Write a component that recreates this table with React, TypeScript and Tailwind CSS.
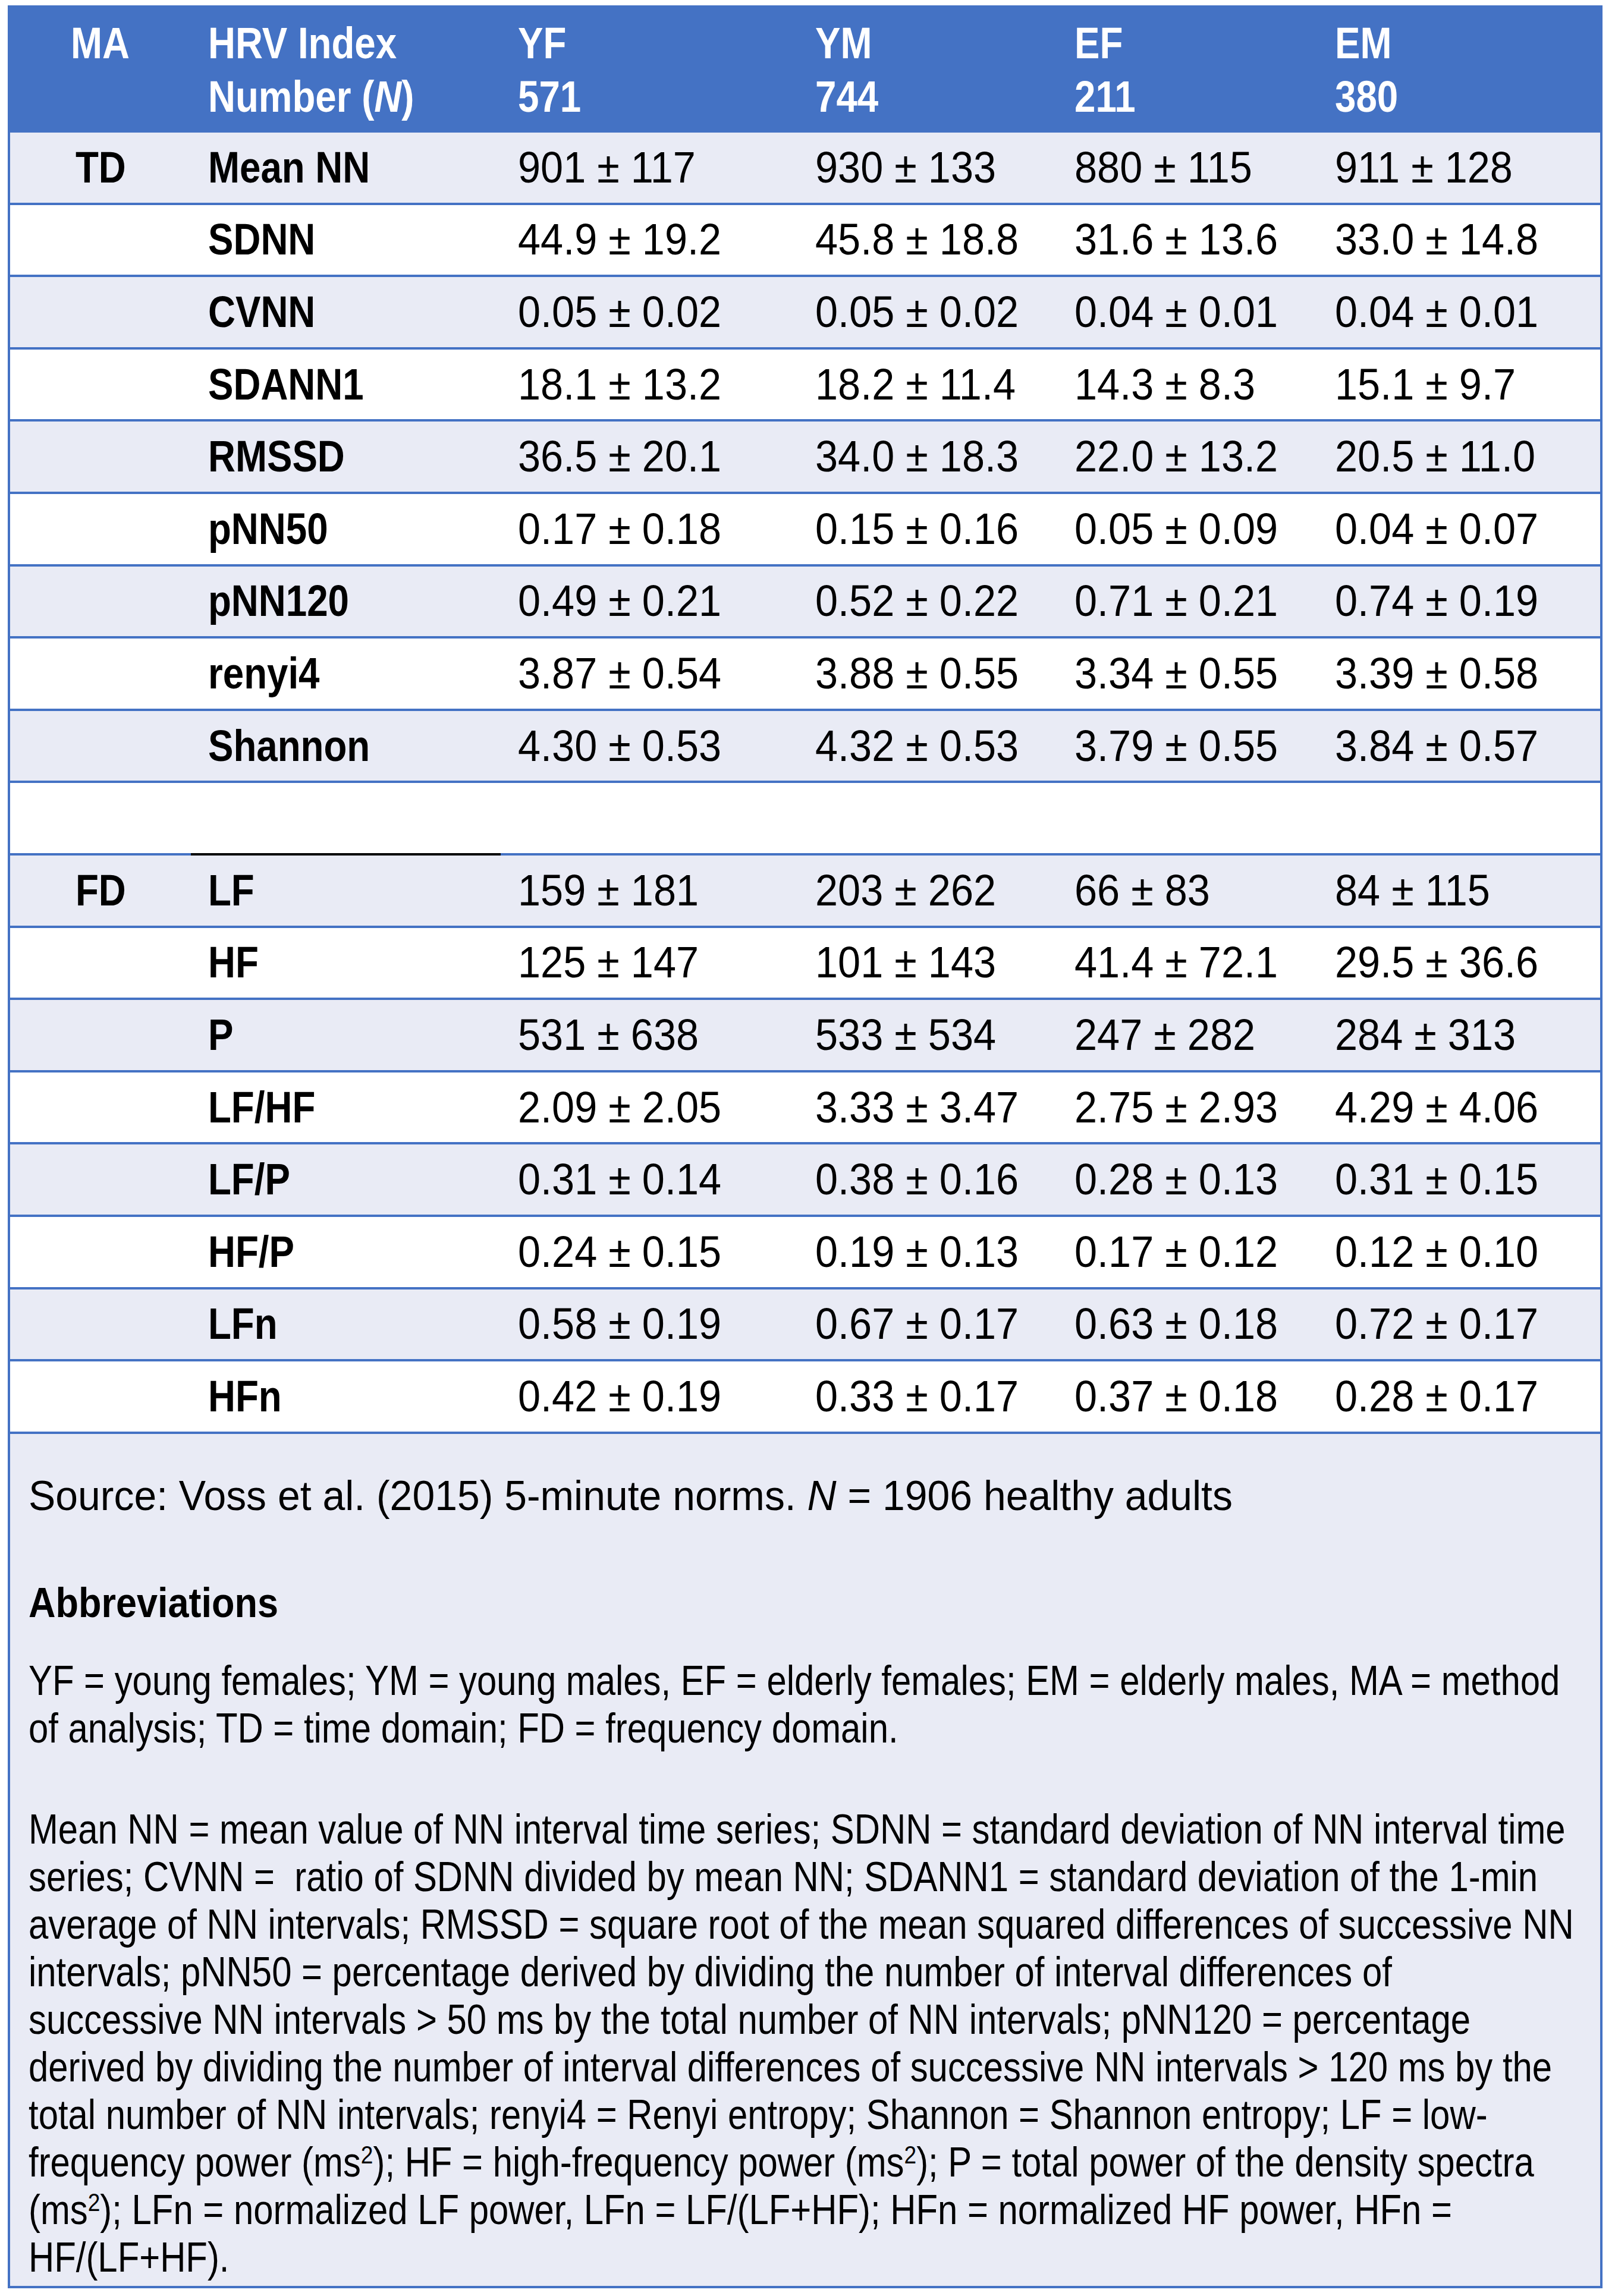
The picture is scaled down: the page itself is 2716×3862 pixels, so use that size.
import React from "react";

const cols = "grid grid-cols-[304px_521px_500px_436px_438px_1fr]";

type Row = { ma?: string; name: string; v: string[] } | null;

const rows: Row[] = [
  { ma: "TD", name: "Mean NN", v: ["901 ± 117", "930 ± 133", "880 ± 115", "911 ± 128"] },
  { name: "SDNN", v: ["44.9 ± 19.2", "45.8 ± 18.8", "31.6 ± 13.6", "33.0 ± 14.8"] },
  { name: "CVNN", v: ["0.05 ± 0.02", "0.05 ± 0.02", "0.04 ± 0.01", "0.04 ± 0.01"] },
  { name: "SDANN1", v: ["18.1 ± 13.2", "18.2 ± 11.4", "14.3 ± 8.3", "15.1 ± 9.7"] },
  { name: "RMSSD", v: ["36.5 ± 20.1", "34.0 ± 18.3", "22.0 ± 13.2", "20.5 ± 11.0"] },
  { name: "pNN50", v: ["0.17 ± 0.18", "0.15 ± 0.16", "0.05 ± 0.09", "0.04 ± 0.07"] },
  { name: "pNN120", v: ["0.49 ± 0.21", "0.52 ± 0.22", "0.71 ± 0.21", "0.74 ± 0.19"] },
  { name: "renyi4", v: ["3.87 ± 0.54", "3.88 ± 0.55", "3.34 ± 0.55", "3.39 ± 0.58"] },
  { name: "Shannon", v: ["4.30 ± 0.53", "4.32 ± 0.53", "3.79 ± 0.55", "3.84 ± 0.57"] },
  null,
  { ma: "FD", name: "LF", v: ["159 ± 181", "203 ± 262", "66 ± 83", "84 ± 115"] },
  { name: "HF", v: ["125 ± 147", "101 ± 143", "41.4 ± 72.1", "29.5 ± 36.6"] },
  { name: "P", v: ["531 ± 638", "533 ± 534", "247 ± 282", "284 ± 313"] },
  { name: "LF/HF", v: ["2.09 ± 2.05", "3.33 ± 3.47", "2.75 ± 2.93", "4.29 ± 4.06"] },
  { name: "LF/P", v: ["0.31 ± 0.14", "0.38 ± 0.16", "0.28 ± 0.13", "0.31 ± 0.15"] },
  { name: "HF/P", v: ["0.24 ± 0.15", "0.19 ± 0.13", "0.17 ± 0.12", "0.12 ± 0.10"] },
  { name: "LFn", v: ["0.58 ± 0.19", "0.67 ± 0.17", "0.63 ± 0.18", "0.72 ± 0.17"] },
  { name: "HFn", v: ["0.42 ± 0.19", "0.33 ± 0.17", "0.37 ± 0.18", "0.28 ± 0.17"] },
];

const groups = [
  { label: "YF", n: "571" },
  { label: "YM", n: "744" },
  { label: "EF", n: "211" },
  { label: "EM", n: "380" },
];

// the source uses a condensed face; squeeze Liberation Sans to match
const Bold = ({ children, center }: { children: React.ReactNode; center?: boolean }) => (
  <span className={`inline-block whitespace-nowrap font-bold scale-x-[0.86] ${center ? "origin-center" : "origin-left"}`}>
    {children}
  </span>
);

const Num = ({ children }: { children: React.ReactNode }) => (
  <span className="inline-block origin-left scale-x-[0.925] whitespace-nowrap">{children}</span>
);

const Sq = () => <sup className="text-[0.62em]">2</sup>;

const Line = ({ children, squeeze = "scale-x-[0.855]" }: { children: React.ReactNode; squeeze?: string }) => (
  <div className="h-[80px] whitespace-nowrap">
    <span className={`inline-block origin-left ${squeeze}`}>{children}</span>
  </div>
);

export default function App() {
  return (
    <div className="min-h-screen bg-white pl-[13px] pt-[9px] font-['Liberation_Sans',Arial,sans-serif] text-black">
      <div className="w-[2682px] overflow-hidden border-4 border-[#4472C4]">
        {/* header */}
        <div className={`${cols} h-[210px] items-center bg-[#4472C4] text-[74px] leading-[90px] text-white`}>
          <div className="self-start pt-[15px] text-center">
            <Bold center>MA</Bold>
          </div>
          <div className="pl-[29px]">
            <Bold>HRV Index</Bold>
            <br />
            <Bold>
              Number (<i>N</i>)
            </Bold>
          </div>
          {groups.map((g) => (
            <div key={g.label} className="pl-[29px]">
              <Bold>{g.label}</Bold>
              <br />
              <Bold>{g.n}</Bold>
            </div>
          ))}
        </div>

        {/* body */}
        {rows.map((r, i) => {
          const bg = i % 2 === 0 ? "bg-[#E9EBF5]" : "bg-white";
          const cell = "flex h-[121.6px] items-center border-b-4 border-[#4472C4]";
          if (!r) {
            return (
              <div key={i} className={`${cols} ${bg}`}>
                <div className={cell} />
                <div className={`${cell} border-black`} />
                <div className={cell} />
                <div className={cell} />
                <div className={cell} />
                <div className={cell} />
              </div>
            );
          }
          return (
            <div key={i} className={`${cols} ${bg} text-[74px] leading-none`}>
              <div className={`${cell} justify-center`}>{r.ma && <Bold center>{r.ma}</Bold>}</div>
              <div className={`${cell} pl-[29px]`}>
                <Bold>{r.name}</Bold>
              </div>
              {r.v.map((v, j) => (
                <div key={j} className={`${cell} pl-[29px]`}>
                  <Num>{v}</Num>
                </div>
              ))}
            </div>
          );
        })}

        {/* notes */}
        <div className="h-[1433px] bg-[#E9EBF5] pl-[31px] pt-[64px] text-[70px] leading-[80px]">
          <Line squeeze="scale-x-[0.97]">
            Source: Voss et al. (2015) 5-minute norms. <i>N</i> = 1906 healthy adults
          </Line>
          <div className="mt-[100px]">
            <Line squeeze="scale-x-[0.9]">
              <b>Abbreviations</b>
            </Line>
          </div>
          <div className="mt-[51px]">
            <Line>YF = young females; YM = young males, EF = elderly females; EM = elderly males, MA = method</Line>
            <Line>of analysis; TD = time domain; FD = frequency domain.</Line>
          </div>
          <div className="mt-[90px]">
            <Line>Mean NN = mean value of NN interval time series; SDNN = standard deviation of NN interval time</Line>
            <Line>series; CVNN =&nbsp; ratio of SDNN divided by mean NN; SDANN1 = standard deviation of the 1-min</Line>
            <Line>average of NN intervals; RMSSD = square root of the mean squared differences of successive NN</Line>
            <Line>intervals; pNN50 = percentage derived by dividing the number of interval differences of</Line>
            <Line>successive NN intervals &gt; 50 ms by the total number of NN intervals; pNN120 = percentage</Line>
            <Line>derived by dividing the number of interval differences of successive NN intervals &gt; 120 ms by the</Line>
            <Line>total number of NN intervals; renyi4 = Renyi entropy; Shannon = Shannon entropy; LF = low-</Line>
            <Line>
              frequency power (ms<Sq />); HF = high-frequency power (ms<Sq />); P = total power of the density spectra
            </Line>
            <Line>
              (ms<Sq />); LFn = normalized LF power, LFn = LF/(LF+HF); HFn = normalized HF power, HFn =
            </Line>
            <Line>HF/(LF+HF).</Line>
          </div>
        </div>
      </div>
    </div>
  );
}
